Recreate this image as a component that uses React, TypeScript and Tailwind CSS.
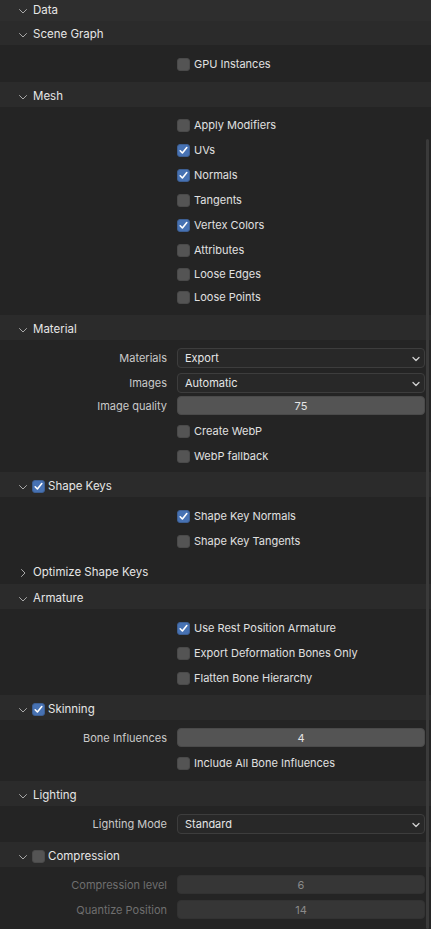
import React from "react";

const font = { fontFamily: "Inter, 'Noto Sans', 'DejaVu Sans', sans-serif" };

function Chevron({ open = true }: { open?: boolean }) {
  return (
    <svg width="10" height="10" viewBox="0 0 10 10" className="shrink-0">
      {open ? (
        <path d="M1.5 3.5 L5 7 L8.5 3.5" fill="none" stroke="#a8a8a8" strokeWidth="1" strokeLinecap="round" strokeLinejoin="round" />
      ) : (
        <path d="M3.5 1.5 L7 5 L3.5 8.5" fill="none" stroke="#a8a8a8" strokeWidth="1" strokeLinecap="round" strokeLinejoin="round" />
      )}
    </svg>
  );
}

function Box({ checked }: { checked: boolean }) {
  return checked ? (
    <div className="w-[13px] h-[13px] rounded-[3px] bg-[#4772b3] border border-[#3d5f93] flex items-center justify-center shrink-0">
      <svg width="11" height="11" viewBox="0 0 11 11">
        <path d="M2.2 5.8 L4.4 8 L8.8 2.6" fill="none" stroke="#ffffff" strokeWidth="1.6" strokeLinecap="round" strokeLinejoin="round" />
      </svg>
    </div>
  ) : (
    <div className="w-[13px] h-[13px] rounded-[3px] bg-[#545454] border border-[#4a4a4a] shrink-0" />
  );
}

function Header({ title, open = true, check, h = "h-[25px]", bg = "bg-[#2b2b2b]", pt = "pt-[4px]" }: { title: string; open?: boolean; check?: boolean; h?: string; bg?: string; pt?: string }) {
  return (
    <div className={`${h} ${bg} ${pt} flex items-center pl-[18px] text-[11.5px] text-[#e6e6e6]`}>
      <Chevron open={open} />
      {check !== undefined ? (
        <div className="flex items-center ml-[4px] gap-[3px]">
          <Box checked={check} />
          <span>{title}</span>
        </div>
      ) : (
        <span className="ml-[5px]">{title}</span>
      )}
    </div>
  );
}

function CheckRow({ label, checked, h = "h-[25px]" }: { label: string; checked: boolean; h?: string }) {
  return (
    <div className={`${h} pt-[2px] flex items-center pl-[177px] text-[11px] text-[#e0e0e0]`}>
      <Box checked={checked} />
      <span className="ml-[4px]">{label}</span>
    </div>
  );
}

function LabelCol({ label, dim }: { label: string; dim?: boolean }) {
  return (
    <div className={`w-[168px] pr-[1px] pt-[1px] text-right text-[11px] ${dim ? "text-[#6f6f6f]" : "text-[#cacaca]"}`}>{label}</div>
  );
}

function Dropdown({ label, value, h = "h-[20px]" }: { label: string; value: string; h?: string }) {
  return (
    <div className="flex items-center">
      <LabelCol label={label} />
      <div className={`ml-[9px] w-[248px] ${h} rounded-[4px] bg-[#282828] border border-[#3d3d3d] flex items-center justify-between pl-[7px] pr-[4px] pt-[1px] text-[11px] text-[#e6e6e6]`}>
        <span>{value}</span>
        <svg width="8" height="6" viewBox="0 0 8 6">
          <path d="M1 1.5 L4 4.5 L7 1.5" fill="none" stroke="#d0d0d0" strokeWidth="1.3" strokeLinecap="round" strokeLinejoin="round" />
        </svg>
      </div>
    </div>
  );
}

function NumField({ label, value, dim, h = "h-[19px]" }: { label: string; value: string; dim?: boolean; h?: string }) {
  return (
    <div className="flex items-center">
      <LabelCol label={label} dim={dim} />
      <div
        className={`ml-[9px] w-[248px] ${h} rounded-[4px] flex items-center justify-center pt-[1px] text-[11px] ${
          dim ? "bg-[#363636] border border-[#323232] text-[#8a8a8a]" : "bg-[#545454] border border-[#4a4a4a] text-[#e6e6e6]"
        }`}
      >
        {value}
      </div>
    </div>
  );
}

export default function App() {
  return (
    <div className="w-[431px] h-[929px] overflow-hidden bg-[#242424] relative" style={font}>
      <Header title="Data" h="h-[21px]" bg="bg-[#2e2e2e]" pt="pt-[1px]" />
      <Header title="Scene Graph" h="h-[24px]" />
      <div className="h-[37px] pt-[6px] bg-[#242424]">
        <CheckRow label="GPU Instances" checked={false} h="h-[24px]" />
      </div>

      <Header title="Mesh" />
      <div className="h-[208px] pt-[5px] bg-[#242424]">
        <CheckRow label="Apply Modifiers" checked={false} />
        <CheckRow label="UVs" checked />
        <CheckRow label="Normals" checked />
        <CheckRow label="Tangents" checked={false} />
        <CheckRow label="Vertex Colors" checked />
        <CheckRow label="Attributes" checked={false} />
        <CheckRow label="Loose Edges" checked={false} h="h-[23px]" />
        <CheckRow label="Loose Points" checked={false} h="h-[22px]" />
      </div>

      <Header title="Material" />
      <div className="h-[132px] pt-[8px] bg-[#242424] flex flex-col">
        <Dropdown label="Materials" value="Export" />
        <div className="h-[5px]" />
        <Dropdown label="Images" value="Automatic" />
        <div className="h-[3px]" />
        <NumField label="Image quality" value="75" />
        <div className="h-[3px]" />
        <CheckRow label="Create WebP" checked={false} />
        <CheckRow label="WebP fallback" checked={false} />
      </div>

      <Header title="Shape Keys" check />
      <div className="h-[63px] pt-[6px] bg-[#242424]">
        <CheckRow label="Shape Key Normals" checked />
        <CheckRow label="Shape Key Tangents" checked={false} />
      </div>
      <Header title="Optimize Shape Keys" open={false} h="h-[24px]" bg="bg-[#242424]" pt="pt-[1px]" />

      <Header title="Armature" />
      <div className="h-[86px] pt-[6px] bg-[#242424]">
        <CheckRow label="Use Rest Position Armature" checked />
        <CheckRow label="Export Deformation Bones Only" checked={false} />
        <CheckRow label="Flatten Bone Hierarchy" checked={false} />
      </div>

      <Header title="Skinning" check />
      <div className="h-[61px] pt-[8px] bg-[#242424] flex flex-col">
        <NumField label="Bone Influences" value="4" />
        <div className="h-[3px]" />
        <CheckRow label="Include All Bone Influences" checked={false} />
      </div>

      <Header title="Lighting" />
      <div className="h-[36px] pt-[8px] bg-[#242424]">
        <Dropdown label="Lighting Mode" value="Standard" />
      </div>

      <Header title="Compression" check={false} />
      <div className="h-[62px] pt-[8px] bg-[#242424] flex flex-col">
        <NumField label="Compression level" value="6" dim />
        <div className="h-[6px]" />
        <NumField label="Quantize Position" value="14" dim />
      </div>

      <div className="absolute right-[2px] top-[139px] bottom-0 w-[3px] rounded-full bg-[#3a3a3a]" />
    </div>
  );
}
